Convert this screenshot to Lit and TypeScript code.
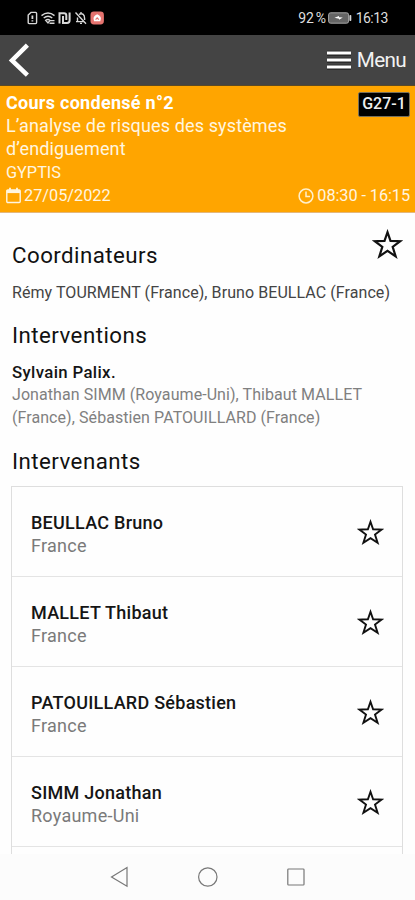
import { LitElement, html, css, svg } from "lit";
import { customElement, property } from "lit/decorators.js";

interface Speaker {
  name: string;
  country: string;
}

const SPEAKERS: Speaker[] = [
  { name: "BEULLAC Bruno", country: "France" },
  { name: "MALLET Thibaut", country: "France" },
  { name: "PATOUILLARD Sébastien", country: "France" },
  { name: "SIMM Jonathan", country: "Royaume-Uni" },
];

@customElement("star-icon")
export class StarIcon extends LitElement {
  @property({ type: Number }) size = 27;

  static styles = css`
    :host { display: block; flex: none; line-height: 0; }
  `;

  render() {
    return html`<svg width=${this.size} height=${this.size} viewBox="0 0 27 27">
      <path d="M13.5 2.8 L16.1 10.3 L24.6 10.6 L18 15.5 L20.6 23.8 L13.5 19.1 L6.4 23.8 L9 15.5 L2.4 10.6 L10.9 10.3 Z"
        fill="none" stroke="#111" stroke-width="1.9" stroke-linejoin="miter" />
    </svg>`;
  }
}

@customElement("status-bar")
export class StatusBar extends LitElement {
  static styles = css`
    :host {
      display: flex; align-items: center; justify-content: space-between;
      box-sizing: border-box; height: 35px; padding: 1px 27px 0 26px;
      background: #000; color: #dedede; font-size: 14px; line-height: 16px;
    }
    .group { display: flex; align-items: center; }
    svg { display: block; }
    .pct { letter-spacing: -0.3px; word-spacing: -1px; }
    .clock { letter-spacing: -0.5px; }
    .battery { margin: 0 4px 0 2px; }
  `;

  render() {
    return html`
      <div class="group">
        <svg width="80" height="16" viewBox="0 0 80 16" fill="none" stroke="#d8d8d8" stroke-width="1.4">
          <path d="M2.2 5 L5 2.4 H9.6 Q10.6 2.4 10.6 3.4 V12.6 Q10.6 13.6 9.6 13.6 H3.2 Q2.2 13.6 2.2 12.6 Z" />
          <path d="M6.4 5.5 V9 M6.4 10.2 V11.6" stroke-width="1.8" />
          <path d="M15.5 5.6 Q22 .4 28.5 5.6 M17.7 8 Q22 4.6 26.3 8 M19.7 10.4 Q22 8.5 24 10.4 L22 13 Z" />
          <path d="M23.5 10.6 H28.5 M23.5 13.2 H28.5" />
          <path d="M33.5 13.6 V3.2 H38 Q40.3 3.2 40.3 5.5 V10 M37 6 V12.9 H41 Q43.6 12.9 43.6 10.5 V2.4" stroke-width="2" />
          <path d="M49.5 2.5 L60 13.7 M50 11.6 H57.5 M51.5 11.3 V7.5 M53 4.3 Q58.5 2.3 58.6 8.5 V10 M54 13.4 H56 M55 2 V3.5" />
          <rect x="64.5" y="1.5" width="13.4" height="13" rx="3.4" fill="#e5736f" stroke="none" />
          <path d="M68.1 11.2 Q66 6.2 71.2 4.3 Q76.4 6.2 74.3 11.2 Z" fill="#fff" stroke="none" />
          <path d="M69.6 9.6 L71.2 7.8 L72.8 9.6" stroke="#e5736f" stroke-width="1.2" />
        </svg>
      </div>
      <div class="group">
        <span class="pct">92 %</span>
        <svg class="battery" width="24" height="12" viewBox="0 0 24 12">
          <rect x=".6" y=".8" width="20" height="10.4" rx="2" fill="#656565" stroke="#a5a5a5" />
          <rect x="21.4" y="3" width="1.9" height="6" rx=".8" fill="#d5d5d5" />
          <path d="M6.5 5.8 L11 4 V5.2 L14.8 5.6 L11 7.8 V6.7 Z" fill="#fff" />
        </svg>
        <span class="clock">16:13</span>
      </div>`;
  }
}

@customElement("nav-header")
export class NavHeader extends LitElement {
  static styles = css`
    :host {
      display: flex; align-items: center; justify-content: space-between;
      box-sizing: border-box; height: 51px; padding: 0 9px 0 8px;
      background: #444; color: #fff; border-bottom: 1px solid #5c4a24;
    }
    svg { display: block; }
    .menu { display: flex; align-items: center; gap: 6px; font-size: 20.7px; line-height: 24px; color: #f2f2f2; }
    .label { letter-spacing: -0.65px; }
  `;

  render() {
    return html`
      <svg width="24" height="36" viewBox="0 0 24 36">
        <path d="M19.4 3.2 L4 18.5 L19.4 33.2" fill="none" stroke="#fff" stroke-width="4.5" />
      </svg>
      <div class="menu">
        <svg width="24" height="20" viewBox="0 0 24 20">
          <path d="M0 3.2 H24 M0 10.2 H24 M0 17.2 H24" stroke="#222" stroke-width="5" />
          <path d="M0 3 H24 M0 10 H24 M0 17 H24" stroke="#fff" stroke-width="3" />
        </svg>
        <span class="label">Menu</span>
      </div>`;
  }
}

@customElement("session-banner")
export class SessionBanner extends LitElement {
  static styles = css`
    :host {
      display: block; box-sizing: border-box; height: 127px; padding: 6px 5px 0 6px;
      background: #ffa500; color: #fff6e0; font-size: 18px; line-height: 23px;
      border-bottom: 1px solid #e3b77c;
    }
    svg { display: block; }
    .top { display: flex; justify-content: space-between; align-items: flex-start; }
    .title { font-weight: 700; color: #fff; letter-spacing: 0.28px; margin-top: -1px; }
    .badge {
      box-sizing: border-box; width: 52px; height: 25px; border: 1px solid #77705c;
      border-radius: 2px; background: #000; color: #eee; font-size: 16px; font-weight: 500;
      line-height: 22px; text-align: center;
    }
    .name { max-width: 300px; height: 47px; margin-top: -3px; letter-spacing: 0.13px; }
    .room { font-size: 16.3px; }
    .bottom { display: flex; justify-content: space-between; font-size: 16.3px; }
    .item { display: flex; align-items: center; gap: 3px; }
    .time { letter-spacing: -0.08px; }
  `;

  render() {
    return html`
      <div class="top">
        <span class="title">Cours condensé n°2</span>
        <span class="badge">G27-1</span>
      </div>
      <div class="name">L’analyse de risques des systèmes d’endiguement</div>
      <div class="room">GYPTIS</div>
      <div class="bottom">
        <span class="item">
          <svg width="15" height="17" viewBox="0 0 15 17" fill="none" stroke="#fff6e0">
            <rect x=".8" y="3" width="13.4" height="12.5" rx="1" stroke-width="1.4" />
            <path d="M.8 4.6 H14.2" stroke-width="3" />
            <path d="M4 .8 V4 M11 .8 V4" stroke-width="1.8" />
          </svg>
          <span>27/05/2022</span>
        </span>
        <span class="item time">
          <svg width="16" height="16" viewBox="0 0 16 16" fill="none" stroke="#fff0cc" stroke-width="1.5">
            <circle cx="8" cy="8" r="6.9" />
            <path d="M8 3.4 V8.4 H12" />
          </svg>
          <span>08:30 - 16:15</span>
        </span>
      </div>`;
  }
}

@customElement("speaker-row")
export class SpeakerRow extends LitElement {
  @property() name = "";
  @property() country = "";

  static styles = css`
    :host {
      display: flex; align-items: center; justify-content: space-between;
      box-sizing: border-box; height: 90px; padding: 1px 18px 0 19px;
      border-bottom: 1px solid #e4e4e4; font-size: 18px; line-height: 23px; letter-spacing: 0.26px;
    }
    .text { padding-top: 3px; }
    .name { font-weight: 500; color: #151515; }
    .country { color: #7a7a7a; }
  `;

  render() {
    return html`
      <div class="text">
        <div class="name">${this.name}</div>
        <div class="country">${this.country}</div>
      </div>
      <star-icon></star-icon>`;
  }
}

@customElement("system-nav")
export class SystemNav extends LitElement {
  static styles = css`
    :host { display: flex; align-items: center; justify-content: center; height: 46px; background: #fcfcfc; }
    svg { display: block; }
  `;

  render() {
    const shapes = svg`
      <path d="M1.5 12 L17 2.6 V21.2 Z" />
      <circle cx="97.8" cy="12" r="9.2" />
      <rect x="177.8" y="4" width="16.2" height="16" rx=".8" />`;
    return html`<svg width="196" height="24" viewBox="0 0 196 24" fill="none" stroke="#777" stroke-width="1.2">${shapes}</svg>`;
  }
}

@customElement("app-root")
export class AppRoot extends LitElement {
  static styles = css`
    :host {
      display: flex; flex-direction: column; height: 900px; overflow: hidden;
      background: #fefefe; font-family: Roboto, sans-serif;
    }
    main { flex: 1; min-height: 0; overflow: hidden; padding: 0 12px; }
    .head { display: flex; justify-content: space-between; align-items: flex-start; padding-top: 16px; }
    h2 { margin: 0; font-size: 22.3px; line-height: 28px; font-weight: 400; color: #111; letter-spacing: 0.45px; }
    .head h2 { margin-top: 12px; }
    p { margin: 0; font-size: 16px; line-height: 23px; letter-spacing: 0.07px; }
    .coordinators { margin-top: 12px; color: #444; white-space: nowrap; }
    .section { margin-top: 17px; }
    .talk { margin-top: 12px; color: #151515; font-weight: 500; font-size: 16.8px; letter-spacing: 0.35px; }
    .authors { margin-top: -1px; color: #808080; }
    .last { margin-top: 18px; }
    .list { margin: 11px 0 0 -1px; border: 1px solid #dedede; border-bottom: 0; width: 390px; height: 400px; }
  `;

  render() {
    return html`
      <status-bar></status-bar>
      <nav-header></nav-header>
      <session-banner></session-banner>
      <main>
        <div class="head">
          <h2>Coordinateurs</h2>
          <star-icon .size=${31}></star-icon>
        </div>
        <p class="coordinators">Rémy TOURMENT (France), Bruno BEULLAC (France)</p>
        <h2 class="section">Interventions</h2>
        <p class="talk">Sylvain Palix.</p>
        <p class="authors">Jonathan SIMM (Royaume-Uni), Thibaut MALLET (France), Sébastien PATOUILLARD (France)</p>
        <h2 class="last">Intervenants</h2>
        <div class="list">
          ${SPEAKERS.map((s) => html`<speaker-row .name=${s.name} .country=${s.country}></speaker-row>`)}
        </div>
      </main>
      <system-nav></system-nav>`;
  }
}
